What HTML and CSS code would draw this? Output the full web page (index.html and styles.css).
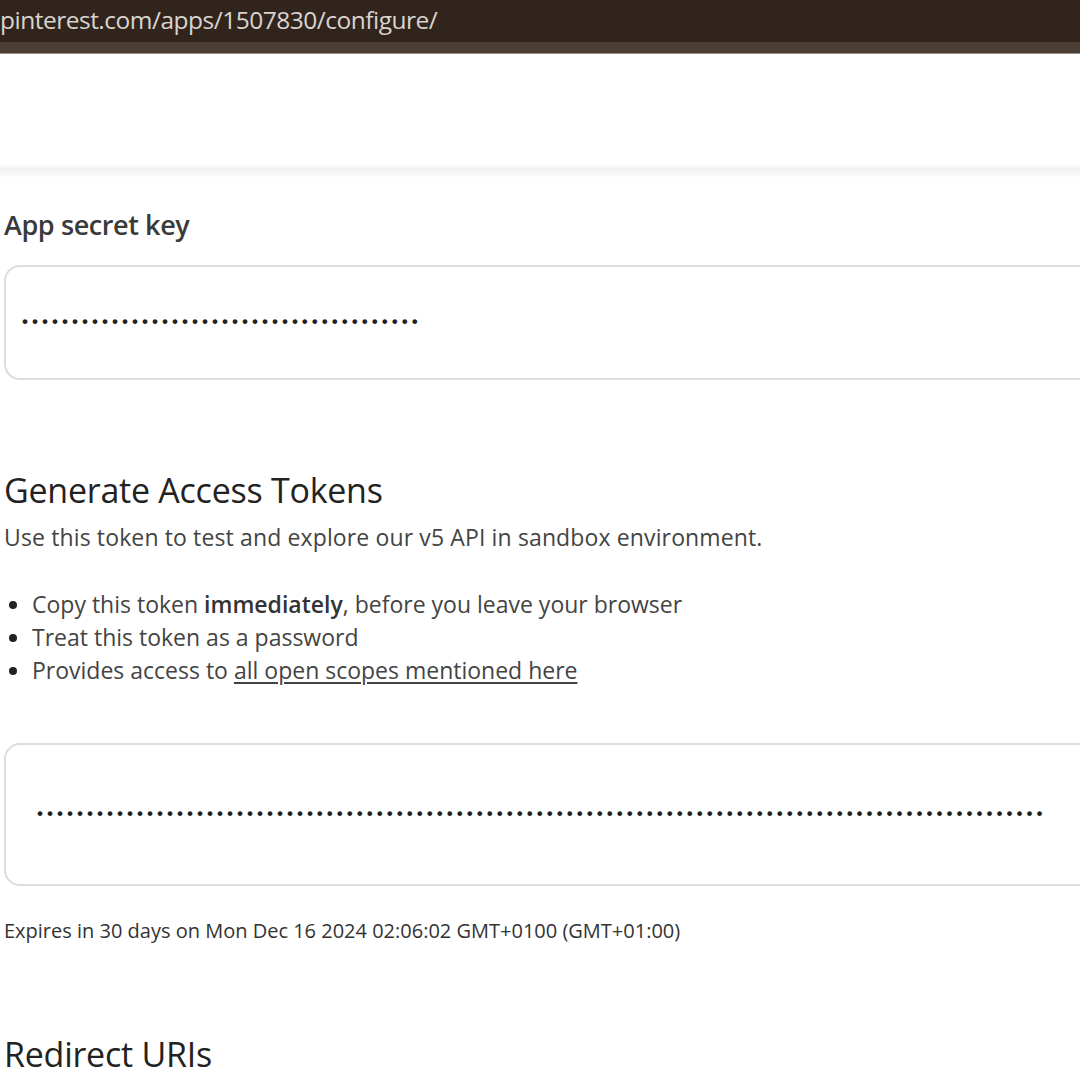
FILE: index.html
```html
<!DOCTYPE html>
<html lang="en">
<head>
<meta charset="utf-8">
<title>Configure app</title>
<link rel="stylesheet" href="styles.css">
</head>
<body>
<header class="topbar">
  <div class="url">pinterest.com/apps/1507830/configure/</div>
  <div class="tabstrip"></div>
</header>
<div class="spacer"></div>
<div class="shadow-band"></div>
<main class="content">
  <section class="field">
    <h3 class="label">App secret key</h3>
    <div class="box box-secret"><span class="dots">••••••••••••••••••••••••••••••••••••••••</span></div>
  </section>

  <section class="tokens">
    <h2 class="heading">Generate Access Tokens</h2>
    <p class="desc">Use this token to test and explore our v5 API in sandbox environment.</p>
    <ul class="bullets">
      <li>Copy this token <b>immediately</b>, before you leave your browser</li>
      <li>Treat this token as a password</li>
      <li>Provides access to <a href="#" class="link">all open scopes mentioned here</a></li>
    </ul>
    <div class="box box-token"><span class="dots">•••••••••••••••••••••••••••••••••••••••••••••••••••••••••••••••••••••••••••••••••••••••••••••••••••••</span></div>
    <p class="expires">Expires in 30 days on Mon Dec 16 2024 02:06:02 GMT+0100 (GMT+01:00)</p>
  </section>

  <section class="redirect">
    <h2 class="heading">Redirect URIs</h2>
  </section>
</main>
</body>
</html>
```

FILE: styles.css
```css
html, body {
  margin: 0;
  padding: 0;
  background: #ffffff;
  overflow: hidden;
  width: 1080px;
  height: 1080px;
}
body {
  font-family: "Open Sans", "Noto Sans", sans-serif;
  color: #333;
}
.topbar {
  background: #30241d;
}
.url {
  height: 42px;
  line-height: 40px;
  font-size: 24.5px;
  color: #d9d4cf;
  letter-spacing: -0.5px;
  white-space: nowrap;
}
.tabstrip {
  height: 11px;
  background: #4a3e35;
  border-bottom: 1px solid #9a918b;
}
.spacer {
  height: 110px;
}
.shadow-band {
  height: 14px;
  background: linear-gradient(#fbfbfb, #f3f3f3 40%, #f7f7f7 70%, #ffffff);
}
.content {
  padding-left: 4px;
}
.label {
  margin: 31px 0 0 0;
  font-size: 27px;
  font-weight: 600;
  color: #3a3a3a;
  letter-spacing: -0.4px;
  line-height: 32px;
}
.box {
  width: 1200px;
  border: 2px solid #dcdcdc;
  border-radius: 16px;
  box-sizing: border-box;
  display: flex;
  align-items: center;
  background: #fff;
}
.box-secret {
  margin-top: 24px;
  height: 115px;
  padding-left: 14px;
}
.box-token {
  margin-top: 56px;
  height: 143px;
  padding-left: 29px;
}
.dots {
  font-family: "Liberation Mono", monospace;
  font-size: 16.67px;
  color: #1e1e1e;
  white-space: nowrap;
  font-weight: bold;
}
.heading {
  margin: 0;
  font-size: 34px;
  font-weight: 500;
  color: #222;
  letter-spacing: -0.25px;
  line-height: 40px;
}
.tokens {
  margin-top: 90px;
}
.desc {
  margin: 13px 0 0 0;
  font-size: 23px;
  color: #444;
  letter-spacing: 0.13px;
  line-height: 28px;
}
.bullets {
  margin: 37px 0 0 0;
  padding-left: 28px;
  font-size: 23px;
  color: #444;
  letter-spacing: 0;
  line-height: 33px;
}
.bullets li::marker {
  color: #222;
}
.bullets b {
  font-weight: 600;
  color: #333;
}
.link {
  color: #444;
  text-decoration: underline;
  text-underline-offset: 3px;
}
.expires {
  margin: 33px 0 0 0;
  font-size: 20px;
  color: #333;
  letter-spacing: 0;
  line-height: 24px;
}
.redirect {
  margin-top: 91px;
}
```
